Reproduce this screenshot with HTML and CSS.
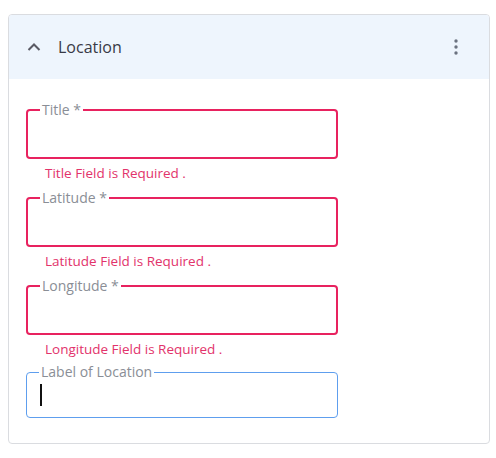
FILE: index.html
```html
<!DOCTYPE html>
<html>
<head>
<meta charset="utf-8">
<link rel="stylesheet" href="styles.css">
</head>
<body>
<div class="card">
  <div class="card-header">
    <svg class="chevron" width="14" height="10" viewBox="0 0 14 10"><polyline points="1.5,8 7,2.5 12.5,8" fill="none" stroke="#5a5a64" stroke-width="2"/></svg>
    <span class="title">Location</span>
    <svg class="kebab" width="6" height="16" viewBox="0 0 6 16"><circle cx="3" cy="2" r="1.7" fill="#6b7280"/><circle cx="3" cy="8" r="1.7" fill="#6b7280"/><circle cx="3" cy="14" r="1.7" fill="#6b7280"/></svg>
  </div>
  <div class="card-body">
    <div class="field">
      <fieldset class="box error">
        <legend>Title *</legend>
        <div class="control"></div>
      </fieldset>
      <p class="msg">Title Field is Required .</p>
    </div>
    <div class="field">
      <fieldset class="box error">
        <legend>Latitude *</legend>
        <div class="control"></div>
      </fieldset>
      <p class="msg">Latitude Field is Required .</p>
    </div>
    <div class="field">
      <fieldset class="box error">
        <legend>Longitude *</legend>
        <div class="control"></div>
      </fieldset>
      <p class="msg">Longitude Field is Required .</p>
    </div>
    <div class="field last">
      <fieldset class="box focus">
        <legend>Label of Location</legend>
        <div class="control focus-control"><span class="caret"></span></div>
      </fieldset>
    </div>
  </div>
</div>
</body>
</html>
```
FILE: styles.css
```css
html, body {
  margin: 0;
  padding: 0;
  background: #ffffff;
  font-family: "Open Sans", "Noto Sans", sans-serif;
}
.card {
  margin: 14px 0 0 8px;
  width: 482px;
  box-sizing: border-box;
  border: 1px solid #dadce0;
  border-radius: 4px;
  background: #fff;
  overflow: hidden;
}
.card-header {
  height: 64px;
  background: #eef5fd;
  display: flex;
  align-items: center;
  padding: 0 30px 0 18px;
}
.chevron {
  display: block;
  margin-top: -1px;
}
.title {
  margin-left: 17px;
  font-size: 16px;
  color: #393a46;
  flex: 1;
}
.kebab {
  display: block;
  margin-top: 0;
}
.card-body {
  padding: 24px 0 25px 17px;
}
.field {
  width: 312px;
  margin-bottom: 10px;
}
.field.last {
  margin-top: -2px;
  margin-bottom: 0;
}
.box {
  margin: 0;
  padding: 0 12px;
  border-radius: 4px;
  min-width: 0;
}
.box legend {
  font-size: 14px;
  line-height: 14px;
  color: #8a8e96;
  padding: 0 2px;
  margin-left: 0;
}
.box.error {
  border: 2px solid #e8225f;
}
.box.focus {
  border: 1px solid #5e9eee;
}
.control {
  height: 40px;
}
.focus-control {
  height: 38px;
  display: flex;
  align-items: flex-start;
}
.caret {
  display: block;
  width: 2px;
  height: 22px;
  background: #111;
  margin-top: 5px;
  margin-left: 1px;
}
.msg {
  margin: 6px 0 0 19px;
  font-size: 13.5px;
  line-height: 16px;
  color: #e2336b;
}
```
